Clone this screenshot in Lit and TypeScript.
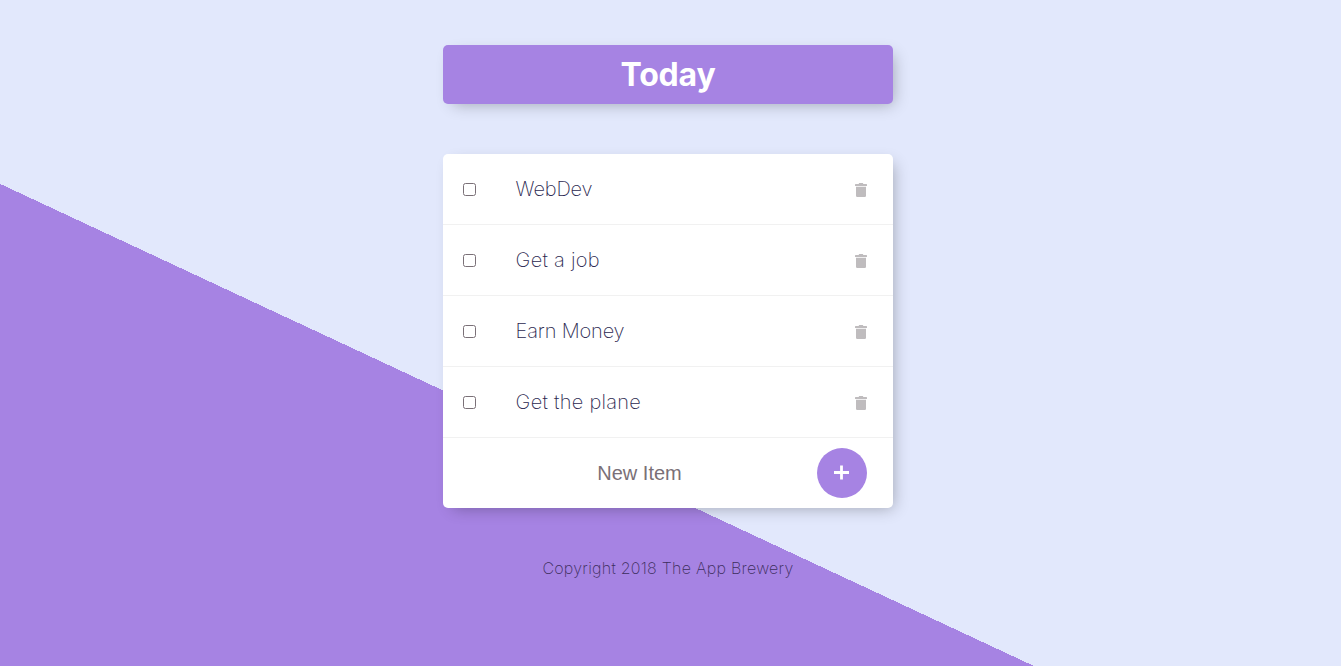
import { LitElement, html, css } from "lit";
import { customElement } from "lit/decorators.js";
import { classMap } from "lit/directives/class-map.js";

@customElement("app-root")
export class AppRoot extends LitElement {
  static styles = css`
    :host {
      display: block;
      box-sizing: border-box;
      height: 666px;
      overflow: hidden;
      padding-top: 45px;
      font-family: Inter, "Helvetica Neue", Arial, sans-serif;
      background-color: #e2e8fc;
      background-image: linear-gradient(25deg, #a683e3 50%, #e2e8fc 50%);
      background-size: 100% 993px;
      background-repeat: no-repeat;
    }
    * { box-sizing: border-box; }
    .box {
      width: 450px;
      margin: 0 auto 50px 443px;
      background: #fff;
      border-radius: 5px;
      box-shadow: 5px 5px 15px -5px rgba(0, 0, 0, 0.3);
    }
    .heading {
      height: 59px;
      background: #a683e3;
      display: flex;
      align-items: center;
      justify-content: center;
    }
    h1 { margin: 0; color: #fff; font-size: 32px; font-weight: 700; line-height: 39px; letter-spacing: -0.2px; }
    .item {
      height: 71px;
      display: flex;
      align-items: center;
      border-bottom: 1px solid #f1f1f1;
      padding: 0 26px 0 20px;
    }
    .check { appearance: none; width: 13px; height: 13px; margin: 0; border: 1px solid #7a7077; border-radius: 2.5px; background: #fff; }
    p { margin: 0 0 0 39.6px; flex: 1; font-size: 20px; font-weight: 200; line-height: 70px; color: #2b2850; letter-spacing: -0.15px; }
    p.spaced { letter-spacing: 0.28px; }
    .trash { width: 12px; height: 14px; fill: #bfbcbe; margin-top: 2px; }
    .new { display: flex; height: 70px; align-items: center; padding-right: 26px; }
    input[type="text"] {
      flex: 1;
      min-width: 0;
      height: 60px;
      border: 0;
      padding: 0 0 0 19px;
      background: transparent;
      text-align: center;
      font: 400 20px "Liberation Sans", Arial, sans-serif;
    }
    input::placeholder { color: #7a7077; }
    button { width: 50px; height: 50px; border: 0; border-radius: 50%; padding: 0 1px 1px 0; background: #a683e3; display: grid; place-items: center; }
    footer { width: 450px; margin-left: 443px; text-align: center; font-size: 16px; font-weight: 200; letter-spacing: 0.26px; color: #3c2d5c; }
  `;

  private items = [
    { text: "WebDev", spaced: false },
    { text: "Get a job", spaced: true },
    { text: "Earn Money", spaced: false },
    { text: "Get the plane", spaced: true },
  ];

  render() {
    return html`
      <div class="box heading"><h1>Today</h1></div>
      <div class="box">
        ${this.items.map(
          ({ text, spaced }) => html`<div class="item">
            <input class="check" type="checkbox" />
            <p class=${classMap({ spaced })}>${text}</p>
            <svg class="trash" viewBox="0 0 12 14">
              <path d="M0.6 1H3.6L4.2 0H7.8L8.4 1H11.4Q12 1 12 1.6V3H0V1.6Q0 1 .6 1ZM1 3.8H11V12.8Q11 14 9.8 14H2.2Q1 14 1 12.8Z" />
            </svg>
          </div>`
        )}
        <form class="new" @submit=${(e: Event) => e.preventDefault()}>
          <input type="text" placeholder="New Item" autocomplete="off" />
          <button type="submit" aria-label="Add">
            <svg width="15" height="15" viewBox="0 0 15 15"><path d="M7.5 .5v14M0 7.5h15" stroke="#fff" stroke-width="2.8" /></svg>
          </button>
        </form>
      </div>
      <footer>Copyright 2018 The App Brewery</footer>
    `;
  }
}
